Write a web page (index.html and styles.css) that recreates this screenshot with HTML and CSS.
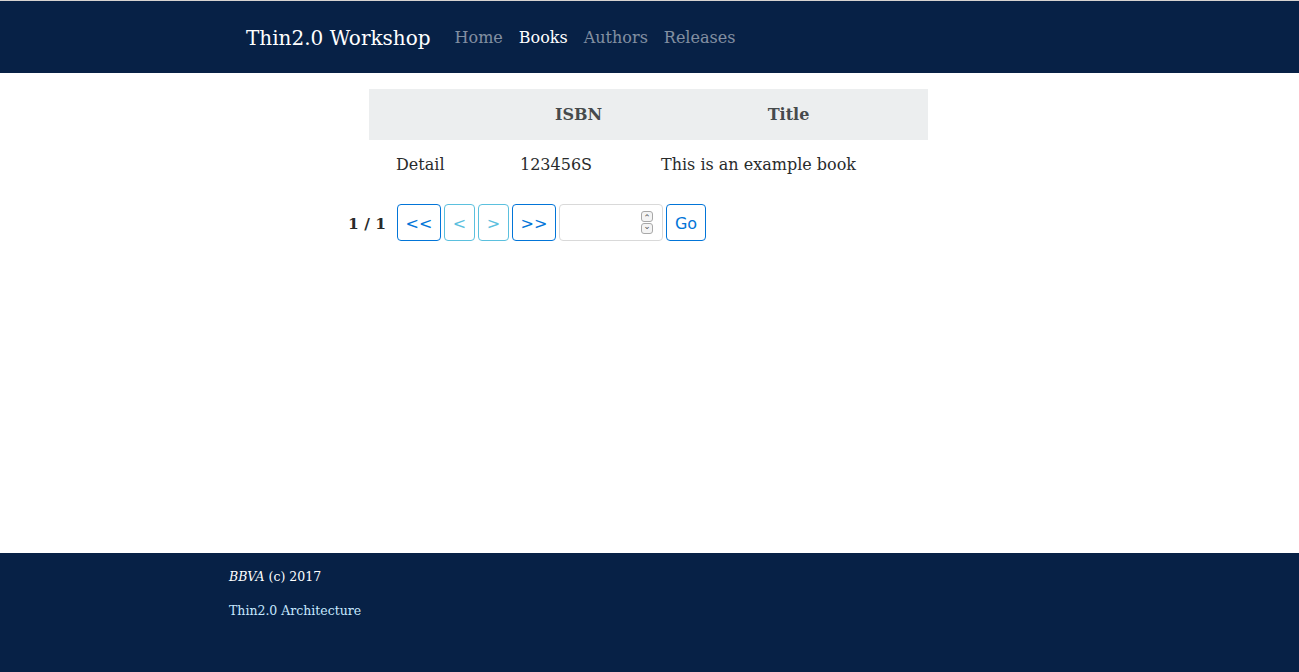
FILE: index.html
```html
<!DOCTYPE html>
<html>
<head>
<meta charset="utf-8">
<link rel="stylesheet" href="styles.css">
</head>
<body>
<div class="page">
  <nav class="navbar">
    <span class="brand">Thin2.0 Workshop</span>
    <a class="nav-link">Home</a>
    <a class="nav-link active">Books</a>
    <a class="nav-link">Authors</a>
    <a class="nav-link">Releases</a>
  </nav>
  <main class="main">
    <table class="books">
      <thead>
        <tr><th class="c1"></th><th class="c2">ISBN</th><th class="c3">Title</th></tr>
      </thead>
      <tbody>
        <tr><td class="c1 detail">Detail</td><td class="c2">123456S</td><td class="c3">This is an example book</td></tr>
      </tbody>
    </table>
    <div class="pager">
      <span class="count">1 / 1</span>
      <div class="btns">
        <button class="btn w44">&lt;&lt;</button>
        <button class="btn off w31">&lt;</button>
        <button class="btn off w31">&gt;</button>
        <button class="btn w44">&gt;&gt;</button>
        <div class="num">
          <span class="spin"><span class="arr">&#8963;</span><span class="arr dn">&#8964;</span></span>
        </div>
        <button class="btn w40">Go</button>
      </div>
    </div>
  </main>
  <footer class="footer">
    <p class="f1"><em>BBVA</em> (c) 2017</p>
    <p class="f2">Thin2.0 Architecture</p>
  </footer>
</div>
</body>
</html>
```
FILE: styles.css
```css
* { box-sizing: border-box; }
html, body { margin: 0; padding: 0; }
body {
  font-family: "DejaVu Serif", serif;
  font-size: 16px;
  color: #292b2c;
  background: #fff;
}
.page {
  height: 672px;
  display: flex;
  flex-direction: column;
  border-top: 1px solid #d6d3d0;
}
.navbar {
  height: 72px;
  background: #072146;
  display: flex;
  align-items: center;
  padding-left: 246px;
  padding-top: 2px;
}
.brand {
  color: #fff;
  font-size: 20px;
  margin-right: 16px;
  line-height: 30px;
}
.nav-link {
  color: rgba(255,255,255,0.5);
  padding: 0 8px;
  line-height: 24px;
}
.nav-link.active { color: #fff; }
.main {
  flex: 1;
  padding-top: 16px;
}
.books {
  width: 559px;
  margin: 0 0 0 369px;
  border-collapse: collapse;
}
.books th {
  background: #eceeef;
  color: #464a4c;
  font-weight: bold;
  text-align: center;
  height: 51px;
  padding: 0 12px;
}
.books td {
  height: 48px;
  padding: 0 12px;
  text-align: left;
}
.books .c1 { width: 139px; }
.books .c2 { width: 141px; }
.books td.detail { padding-left: 27px; }
.pager {
  display: flex;
  align-items: center;
  margin-top: 16px;
  padding-left: 348px;
}
.count {
  font-weight: bold;
  font-size: 15.5px;
  width: 49px;
  padding-top: 2px;
}
.btns {
  display: flex;
  gap: 3px;
}
.btn {
  font-family: "DejaVu Sans", sans-serif;
  font-size: 16px;
  line-height: 19px;
  padding: 9px 0 7px;
  text-align: center;
  border: 1px solid #0275d8;
  color: #0275d8;
  background: #fff;
  border-radius: 4px;
  height: 37px;
}
.w44 { width: 44px; }
.w31 { width: 31px; }
.w40 { width: 40px; }
.btn.off {
  border-color: #5bc0de;
  color: #5bc0de;
}
.num {
  position: relative;
  width: 104px;
  height: 37px;
  border: 1px solid #d9d9d9;
  border-radius: 4px;
}
.spin {
  position: absolute;
  right: 9px;
  top: 6px;
  display: flex;
  flex-direction: column;
  gap: 1px;
}
.arr {
  width: 12px;
  height: 11px;
  border: 1px solid #a8a8a8;
  border-radius: 3px;
  font-family: "DejaVu Sans", sans-serif;
  font-size: 9px;
  line-height: 13px;
  text-align: center;
  color: #555;
  background: #f4f4f4;
}
.arr.dn { line-height: 5px; }
.footer {
  height: 119px;
  background: #072146;
  padding: 15px 0 0 229px;
  font-size: 12.5px;
}
.footer p { margin: 0; line-height: 18px; }
.f1 { color: #fff; }
.f2 { color: #c6e8ff; margin-top: 16px !important; }
```
